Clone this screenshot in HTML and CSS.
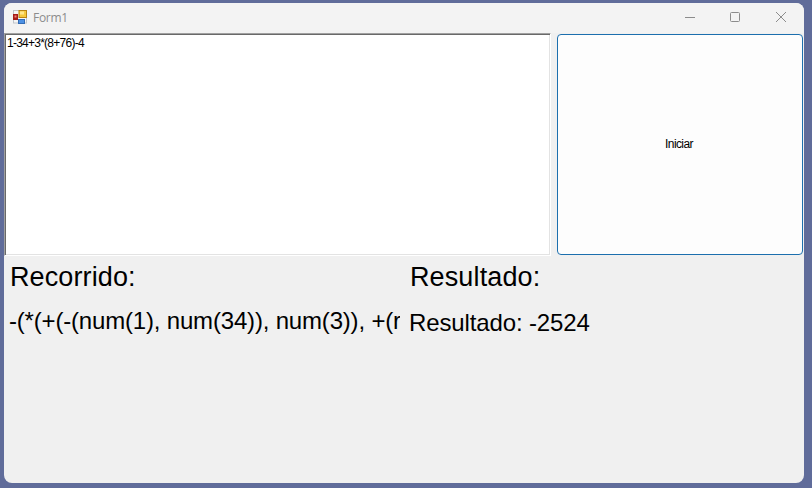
FILE: index.html
```html
<!DOCTYPE html>
<html lang="es">
<head>
<meta charset="utf-8">
<title>Form1</title>
<link rel="stylesheet" href="styles.css">
</head>
<body>
<main class="window">
  <header class="titlebar">
    <svg class="app-icon" width="14" height="14" viewBox="0 0 14 14">
      <rect x=".5" y=".5" width="13" height="12.5" fill="#f5f5f5" stroke="#bfc4ca"/>
      <rect x="0" y="4" width="5" height="6" fill="#a51b18"/>
      <rect x="1.5" y="5.5" width="2" height="2" fill="#ef8177"/>
      <rect x="6" y=".5" width="7.5" height="7" fill="#f6c83c" stroke="#b98413"/>
      <rect x="7" y="1.5" width="4" height="3" fill="#ffe58a"/>
      <rect x="5.5" y="9.5" width="6" height="4" fill="#4d91e4" stroke="#326bb5"/>
    </svg>
    <span class="title">Form1</span>
    <svg class="controls" width="104" height="12" viewBox="0 0 104 12" fill="none" stroke="#8c8c8c">
      <path d="M1 6.5h10"/>
      <rect x="46.5" y="1.5" width="9" height="9" rx="1"/>
      <path d="M92 1l10 10M102 1l-10 10"/>
    </svg>
  </header>
  <section class="inputs">
    <div class="textbox"><span class="small expression">1-34+3*(8+76)-4</span></div>
    <button class="start"><span class="small start-label">Iniciar</span></button>
  </section>
  <section class="results">
    <div class="column">
      <h2 class="heading">Recorrido:</h2>
      <p class="value">-(*(+(-(num(1), num(34)), num(3)), +(r</p>
    </div>
    <div class="column">
      <h2 class="heading">Resultado:</h2>
      <p class="value outcome">Resultado: -2524</p>
    </div>
  </section>
</main>
</body>
</html>
```
FILE: styles.css
```css
* { box-sizing: border-box; }
body {
  margin: 0;
  height: 488px;
  padding: 3px 8px 5px 4px;
  overflow: hidden;
  background: #606c9a;
  font-family: "Liberation Sans", Arial, sans-serif;
  color: #000;
}
.window {
  width: 800px;
  height: 480px;
  border-radius: 8px;
  overflow: hidden;
  background: #f0f0f0;
}
.titlebar {
  display: flex;
  align-items: center;
  height: 30px;
  padding: 0 16px 2px 9px;
  background: #f3f3f3;
}
.title {
  margin-left: 6px;
  font: 12px "Open Sans", sans-serif;
  letter-spacing: -.3px;
  color: #8c8c8c;
}
.controls { margin-left: auto; }
.inputs {
  display: flex;
  height: 223px;
  padding-right: 1px;
}
.textbox {
  width: 547px;
  height: 223px;
  padding: 2px;
  background: #fff;
  border: 1px solid;
  border-color: #a0a0a0 #fff #fff #a0a0a0;
  box-shadow: inset 1px 1px #696969, inset -1px -1px #e3e3e3;
}
.small {
  display: block;
  font-size: 12px;
  line-height: 15px;
  white-space: nowrap;
}
.expression { letter-spacing: -.75px; }
.start {
  width: 246px;
  height: 221px;
  margin: 1px 0 0 6px;
  padding: 0 2px 0 0;
  border: 1px solid #1c6fae;
  border-radius: 4px;
  background: #fdfdfd;
  color: #000;
  font-family: inherit;
}
.start-label { letter-spacing: -.6px; }
.results {
  display: grid;
  grid-template-columns: 396px 1fr;
}
.column {
  overflow: hidden;
  padding: 5px 0 0 5px;
}
.column + .column { padding-left: 9px; }
.heading {
  margin: 0 0 0 1px;
  font-size: 27px;
  line-height: 32px;
  font-weight: 400;
  letter-spacing: .12px;
}
.value {
  margin: 14px 0 0;
  font-size: 24px;
  line-height: 28px;
  letter-spacing: -.18px;
  white-space: nowrap;
}
.outcome { margin-top: 16px; letter-spacing: -.13px; }
```
